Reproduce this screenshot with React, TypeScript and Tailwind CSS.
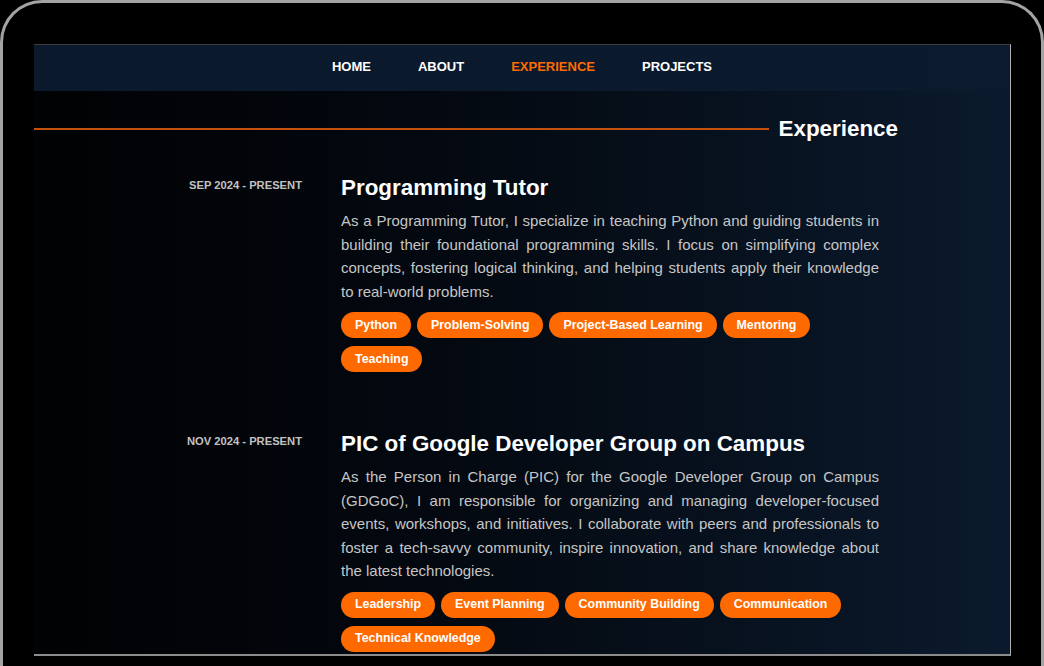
const navItems = ["HOME", "ABOUT", "EXPERIENCE", "PROJECTS"];

const jobs = [
  {
    date: "SEP 2024 - PRESENT",
    title: "Programming Tutor",
    text: "As a Programming Tutor, I specialize in teaching Python and guiding students in building their foundational programming skills. I focus on simplifying complex concepts, fostering logical thinking, and helping students apply their knowledge to real-world problems.",
    tags: ["Python", "Problem-Solving", "Project-Based Learning", "Mentoring", "Teaching"],
  },
  {
    date: "NOV 2024 - PRESENT",
    title: "PIC of Google Developer Group on Campus",
    text: "As the Person in Charge (PIC) for the Google Developer Group on Campus (GDGoC), I am responsible for organizing and managing developer-focused events, workshops, and initiatives. I collaborate with peers and professionals to foster a tech-savvy community, inspire innovation, and share knowledge about the latest technologies.",
    tags: ["Leadership", "Event Planning", "Community Building", "Communication", "Technical Knowledge"],
  },
];

export default function App() {
  return (
    <div className="w-[1044px] h-[666px] bg-black overflow-hidden font-['Liberation_Sans',Arial,sans-serif]">
      <div className="h-[700px] rounded-t-[42px] border-[3px] border-b-0 border-[#a3a3a3] bg-black pt-[41px] pl-[31px] pr-[30px]">
        <div className="w-[977px] h-[612px] overflow-hidden border-t border-t-[#3c3c3c] border-r border-r-[#b0b0b0] border-b-2 border-b-[#8c8c8c] bg-gradient-to-r from-[#010204] via-[#050b14] to-[#0b1a2d] flex flex-col">
          <nav className="h-[46px] shrink-0 pb-[3px] bg-gradient-to-r from-[#0a1a2c] to-[#0b1a2d] flex items-center justify-center gap-[47px] text-[13px] font-bold">
            {navItems.map((n) => (
              <span key={n} className={n === "EXPERIENCE" ? "text-[#ff6a00]" : "text-white"}>
                {n}
              </span>
            ))}
          </nav>

          <div className="mt-[25px] flex items-center pr-[112px]">
            <div className="flex-1 h-[2px] bg-[#c4520e]" />
            <h2 className="ml-[10px] text-[22.4px] leading-[26px] font-bold text-white">Experience</h2>
          </div>

          <div className="mt-[32px] flex flex-col gap-[58px]">
            {jobs.map((job) => (
              <div key={job.title} className="flex gap-[39px]">
                <div className="w-[268px] shrink-0 text-right text-[11.2px] leading-[16px] font-bold text-[#c2c2c2] mt-[3px]">
                  {job.date}
                </div>
                <div className="w-[538px]">
                  <h3 className="text-[22.4px] leading-[28px] font-bold text-white">{job.title}</h3>
                  <p className="mt-[7px] text-[15px] leading-[23.5px] text-[#c6c6c6] text-justify">{job.text}</p>
                  <div className="mt-[9px] flex flex-wrap gap-x-[6px] gap-y-[8px]">
                    {job.tags.map((t) => (
                      <span
                        key={t}
                        className="h-[26px] px-[14px] rounded-full bg-[#ff6a00] text-white text-[12.4px] font-bold flex items-center"
                      >
                        {t}
                      </span>
                    ))}
                  </div>
                </div>
              </div>
            ))}
          </div>
        </div>
      </div>
    </div>
  );
}
